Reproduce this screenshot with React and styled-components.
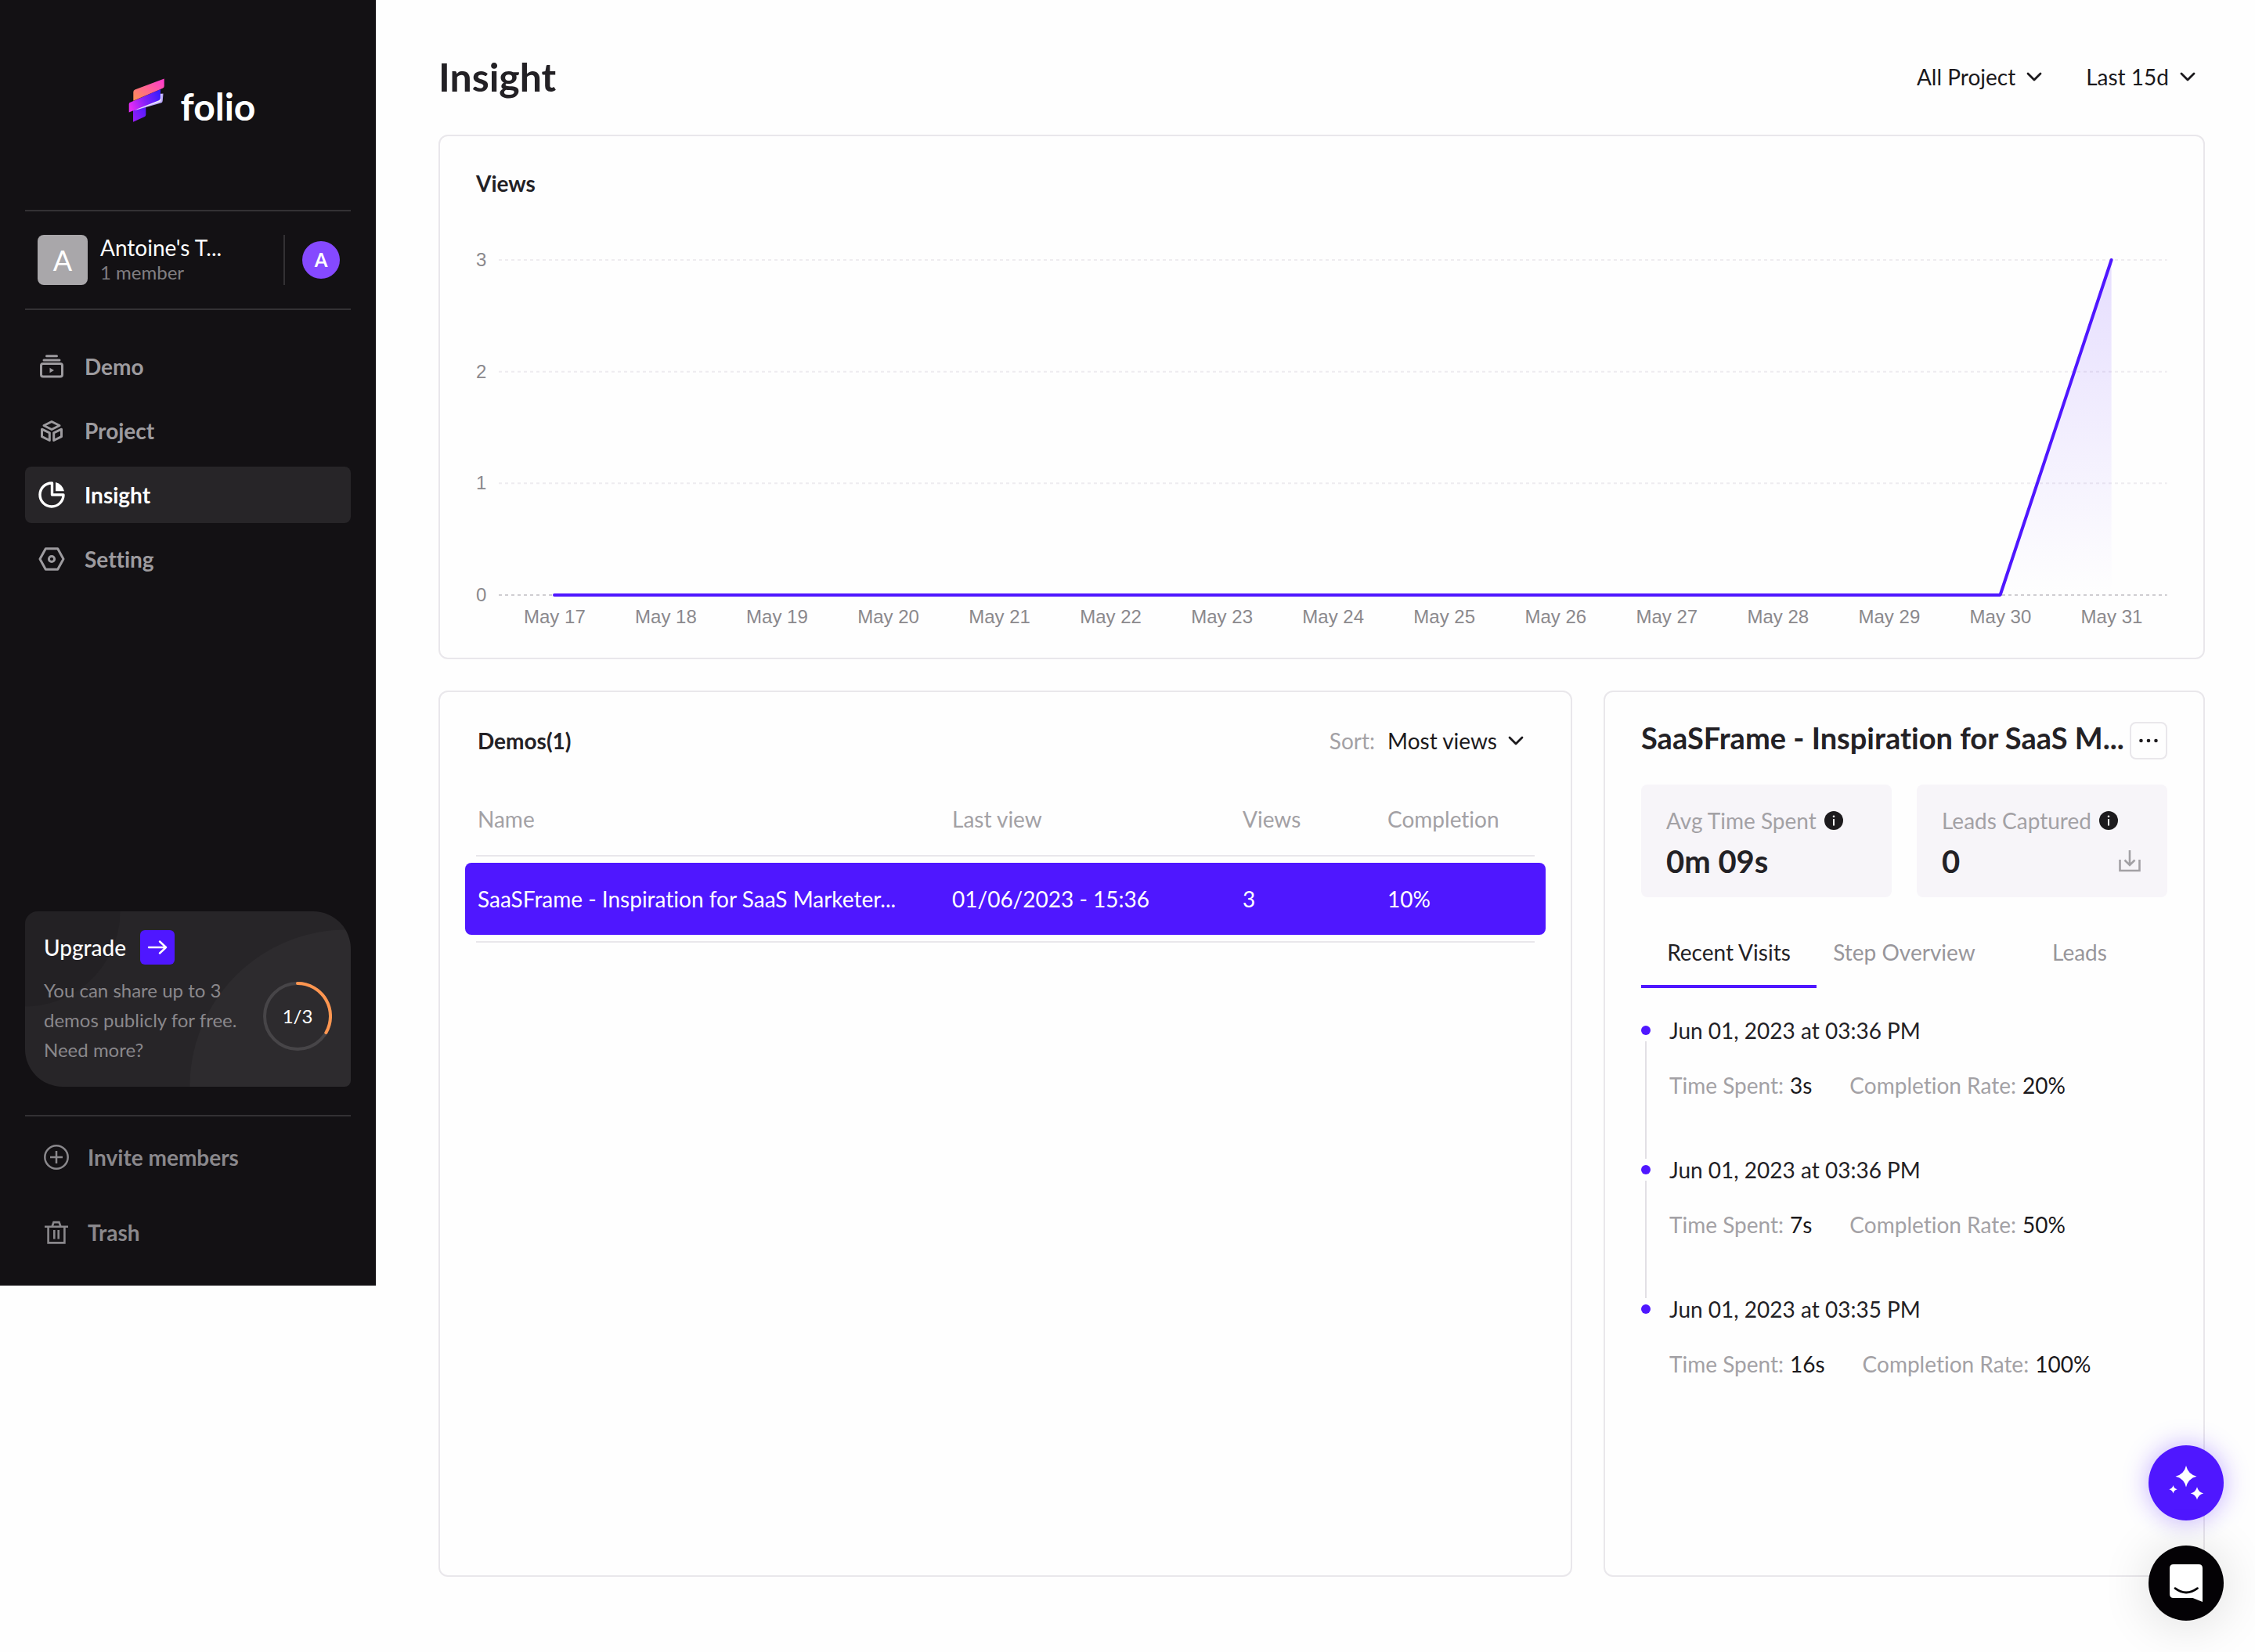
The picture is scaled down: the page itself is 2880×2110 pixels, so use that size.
import React, { useState } from 'react';
import styled, { createGlobalStyle } from 'styled-components';

const GlobalStyle = createGlobalStyle`
  :root {
    --primary: #4f17ff;
    --ink: #232125;
    --muted: #a3a1a5;
    --line: #e9e7eb;
    --sidebar: #131114;
    --sidebar-line: #333134;
  }

  *, *::before, *::after {
    box-sizing: border-box;
  }

  body {
    margin: 0;
    background: #fefefe;
    color: var(--ink);
    font-family: Lato, "Liberation Sans", sans-serif;
    font-size: 28px;
    font-variant-ligatures: none;
    line-height: 40px;
  }

  h1, h2, h3, p, ul, ol, dl, dd {
    margin: 0;
    padding: 0;
  }

  ul, ol {
    list-style: none;
  }

  button, select {
    font: inherit;
    font-variant-ligatures: none;
    color: inherit;
    border: 0;
    padding: 0;
    background: none;
    cursor: pointer;
  }

  a {
    color: inherit;
    text-decoration: none;
  }

  svg {
    display: block;
    flex-shrink: 0;
  }
`;

const Layout = styled.div`
  display: flex;
  align-items: flex-start;
`;

/* Sidebar */

const Sidebar = styled.aside`
  display: flex;
  flex-direction: column;
  flex: 0 0 480px;
  min-height: 1642px;
  padding: 100px 32px 32px;
  background: var(--sidebar);
  color: #fff;
`;

const Logo = styled.a`
  display: flex;
  align-items: flex-start;
  justify-content: center;
  gap: 20px;
  margin-bottom: 102px;
  padding-left: 10px;
`;

const LogoText = styled.span`
  padding-top: 6px;
  font-size: 48px;
  font-weight: 700;
  line-height: 60px;
`;

const Team = styled.div`
  display: flex;
  align-items: center;
  padding: 30px 14px 30px 16px;
  border-top: 2px solid var(--sidebar-line);
  border-bottom: 2px solid var(--sidebar-line);
`;

const TeamAvatar = styled.div`
  width: 64px;
  border-radius: 8px;
  background: #a9a7aa;
  font-size: 36px;
  line-height: 64px;
  text-align: center;
`;

const TeamInfo = styled.div`
  flex: 1;
  margin-left: 16px;
  line-height: 32px;
`;

const TeamMembers = styled.p`
  color: #807e82;
  font-size: 24px;
`;

const UserSlot = styled.div`
  display: flex;
  align-items: center;
  height: 64px;
  padding-left: 22px;
  border-left: 2px solid var(--sidebar-line);
`;

const UserAvatar = styled.button`
  width: 48px;
  height: 48px;
  border-radius: 50%;
  background: #8549ff;
  font-size: 24px;
  font-weight: 700;
  line-height: 48px;
`;

const Nav = styled.nav`
  display: flex;
  flex-direction: column;
  gap: 10px;
  margin-top: 36px;
`;

const NavItem = styled.a`
  display: flex;
  align-items: center;
  gap: 24px;
  height: 72px;
  padding: 0 16px;
  border-radius: 8px;
  background: ${({ $active }) => ($active ? '#272528' : 'transparent')};
  color: ${({ $active }) => ($active ? '#fff' : '#9d9b9f')};
  font-weight: 700;
`;

const Upgrade = styled.section`
  margin-top: auto;
  padding: 24px 24px 28px;
  border-radius: 16px 48px 8px 48px;
  background:
    radial-gradient(circle at 411px 224px, #2d2b2e 200px, transparent 201px),
    radial-gradient(circle at 0 0, #232124 121px, transparent 122px),
    #272528;
`;

const UpgradeHead = styled.div`
  display: flex;
  align-items: center;
  gap: 18px;
`;

const UpgradeTitle = styled.h2`
  font-size: 28px;
  font-weight: 500;
`;

const ArrowButton = styled.button`
  display: grid;
  place-items: center;
  width: 44px;
  height: 44px;
  border-radius: 6px;
  background: var(--primary);
`;

const UpgradeBody = styled.div`
  display: flex;
  gap: 16px;
  margin-top: 14px;
`;

const UpgradeText = styled.p`
  flex: 1;
  color: #8a888c;
  font-size: 24px;
  line-height: 38px;
`;

const Quota = styled.div`
  display: grid;
  place-items: center;
  height: 88px;
  margin: 8px 0 18px;
  font-size: 24px;

  > * {
    grid-area: 1 / 1;
  }
`;

const FooterNav = styled.nav`
  display: flex;
  flex-direction: column;
  gap: 24px;
  margin-top: 36px;
  padding-top: 16px;
  border-top: 2px solid var(--sidebar-line);
`;

const FooterItem = styled(NavItem)`
  padding: 0 24px;
  color: #8a888c;
`;

/* Main */

const Main = styled.main`
  flex: 1;
  min-width: 0;
  padding: 68px 64px 96px 80px;
`;

const PageHeader = styled.header`
  display: flex;
  align-items: center;
  justify-content: space-between;
  margin-bottom: 44px;
`;

const PageTitle = styled.h1`
  font-size: 50px;
  line-height: 60px;
`;

const Filters = styled.div`
  display: flex;
  gap: 56px;
  padding-right: 12px;
`;

const SelectWrap = styled.div`
  display: flex;
  align-items: center;

  svg {
    margin-left: -20px;
    pointer-events: none;
  }
`;

const SelectBox = styled.select`
  appearance: none;
  field-sizing: content;
  height: 40px;
  padding-right: 34px;
  color: #1b191c;
`;

const Card = styled.section`
  border: 2px solid var(--line);
  border-radius: 12px;
`;

const CardTitle = styled.h2`
  font-size: 28px;
`;

const ViewsCard = styled(Card)`
  padding: 40px 46px 38px;
`;

const Chart = styled.div`
  display: grid;
  grid-template-columns: auto minmax(0, 1fr);
  column-gap: 16px;
  margin-top: 64px;
  color: #8b898d;
  font-family: "Liberation Sans", Arial, sans-serif;
  font-size: 24px;
  line-height: 28px;
`;

const YAxis = styled.div`
  display: flex;
  flex-direction: column;
  justify-content: space-between;
`;

const Plot = styled.svg`
  width: 100%;
  height: 428px;
  margin: 14px 0;
  overflow: visible;
`;

const XAxis = styled.div`
  display: grid;
  grid-column: 2;
  grid-template-columns: repeat(15, 1fr);
  text-align: center;
`;

const Panels = styled.div`
  display: grid;
  grid-template-columns: minmax(0, 1fr) 768px;
  gap: 40px;
  margin-top: 40px;
`;

const DemosCard = styled(Card)`
  min-height: 1132px;
  padding: 42px 46px;
`;

const DemosHead = styled.div`
  display: flex;
  justify-content: space-between;
  padding: 0 14px 0 2px;
`;

const Sort = styled.div`
  display: flex;
  gap: 16px;

  label {
    color: var(--muted);
  }
`;

const DemoTable = styled.table`
  display: block;
  margin-top: 60px;

  thead, tbody {
    display: block;
    border-bottom: 2px solid var(--line);
  }

  tbody {
    padding: 8px 0;
  }

  tr {
    display: grid;
    grid-template-columns: 606fr 371fr 185fr 190fr;
  }

  th, td {
    padding: 0 0 0 2px;
    text-align: left;
    white-space: nowrap;
  }

  th {
    padding-bottom: 26px;
    color: var(--muted);
    font-weight: 400;
  }
`;

const SelectedRow = styled.tr`
  margin: 0 -14px;
  padding: 26px 14px;
  border-radius: 8px;
  background: var(--primary);
  color: #fff;
`;

const DetailCard = styled(Card)`
  padding: 38px 46px;
`;

const DetailHead = styled.div`
  display: flex;
  align-items: flex-start;
  justify-content: space-between;
`;

const DetailTitle = styled.h2`
  font-size: 38px;
  white-space: nowrap;
`;

const MoreButton = styled.button`
  display: grid;
  place-items: center;
  width: 48px;
  height: 48px;
  border: 2px solid var(--line);
  border-radius: 8px;
`;

const Stats = styled.div`
  display: grid;
  grid-template-columns: 1fr 1fr;
  gap: 32px;
  margin-top: 32px;
`;

const Stat = styled.div`
  padding: 26px 32px 22px;
  border-radius: 8px;
  background: #f7f5f9;
`;

const StatLabel = styled.div`
  display: flex;
  align-items: center;
  gap: 10px;
  color: var(--muted);
`;

const StatValue = styled.div`
  display: flex;
  align-items: center;
  justify-content: space-between;
  margin-top: 8px;
  font-size: 40px;
  font-weight: 700;
  line-height: 48px;
`;

const Tabs = styled.div`
  display: grid;
  grid-template-columns: repeat(3, 1fr);
  margin-top: 50px;
`;

const Tab = styled.button`
  padding-bottom: 22px;
  border-bottom: 4px solid ${({ $active }) => ($active ? 'var(--primary)' : 'transparent')};
  color: ${({ $active }) => ($active ? 'var(--ink)' : '#98969b')};
`;

const Timeline = styled.ol`
  margin-top: 34px;
`;

const Visit = styled.li`
  display: grid;
  grid-template-columns: 12px 1fr;
  column-gap: 24px;
  min-height: 178px;
`;

const Marker = styled.div`
  display: flex;
  flex-direction: column;
  align-items: center;
  padding-top: 14px;

  &::before {
    content: '';
    width: 12px;
    height: 12px;
    border-radius: 50%;
    background: var(--primary);
  }

  &::after {
    content: '';
    flex: 1;
    width: 2px;
    margin: 8px 0 -6px;
    background: ${({ $last }) => ($last ? 'transparent' : '#e2e0e5')};
  }
`;

const VisitMeta = styled.dl`
  display: flex;
  gap: 48px;
  margin-top: 30px;

  div {
    display: flex;
    gap: 8px;
  }

  dt {
    color: var(--muted);
  }

  dd {
    color: #1b191c;
  }
`;

const Floating = styled.div`
  position: fixed;
  right: 40px;
  bottom: 40px;
  display: flex;
  flex-direction: column;
  gap: 32px;
`;

const FloatingButton = styled.button`
  width: 96px;
  height: 96px;
  border-radius: 50%;
  background: ${({ $dark }) => ($dark ? '#040205' : 'var(--primary)')};
  box-shadow: ${({ $dark }) =>
    $dark ? '0 4px 64px rgba(0, 0, 0, 0.14)' : '0 0 32px rgba(79, 23, 255, 0.35)'};
`;

/* Icons */

const FolioMark = () => (
  <svg width="47" height="56" viewBox="0 0 47 56" aria-hidden="true">
    <defs>
      <linearGradient id="markTop" x1="0" y1="1" x2="1" y2="0">
        <stop offset="0.1" stopColor="#ff8a5c" />
        <stop offset="0.9" stopColor="#ff3fc8" />
      </linearGradient>
      <linearGradient id="markMid" x1="0" y1="0.6" x2="1" y2="0.3">
        <stop offset="0" stopColor="#e42cf5" />
        <stop offset="0.5" stopColor="#8420f8" />
        <stop offset="1" stopColor="#3a1cff" />
      </linearGradient>
      <linearGradient id="markLow" x1="0" y1="1" x2="1" y2="0">
        <stop offset="0" stopColor="#9a1cf5" />
        <stop offset="1" stopColor="#4a1cff" />
      </linearGradient>
    </defs>
    <path d="M6 40L22.3 34v12.5q0 2-2 2.8L6 55.7z" fill="url(#markLow)" />
    <path d="M40 20l4.5-.5-.8 9.5q-.2 2-2.2 2.6L10 40.5z" fill="#b9a8f8" />
    <path d="M40 20l2.3-.3-.6 8q-.2 2-2.2 2.6L8 41z" fill="#e9e2ff" />
    <path d="M.7 33q0-1.600 1.600-2.200L41 14V25q0 2.500-2.200 3.300L.7 43.500z" fill="url(#markMid)" />
    <path d="M6.3 17.500q0-2.200 2-3L45.700.5V10q0 2-2 2.800L6.300 28.800z" fill="url(#markTop)" />
  </svg>
);

const DemoIcon = () => (
  <svg width="36" height="36" fill="none" stroke="currentColor" strokeWidth="3" strokeLinecap="round" aria-hidden="true">
    <path d="M11.5 4.8h13M8 10h20" />
    <rect x="4.5" y="14.5" width="27" height="16.5" rx="2.5" />
    <path d="M15.5 19.8v6.4l5.5-3.2z" fill="currentColor" stroke="none" />
  </svg>
);

const ProjectIcon = () => (
  <svg width="36" height="36" fill="none" stroke="currentColor" strokeWidth="3" strokeLinejoin="round" aria-hidden="true">
    <path d="M18 6.5l10 5-10 5-10-5z" />
    <path d="M5.5 16.2l9.800 4.600v9.700l-9.800-4.800z" />
    <path d="M30.5 16.2l-9.800 4.600v9.700l9.800-4.800z" />
  </svg>
);

const InsightIcon = () => (
  <svg width="36" height="36" fill="none" stroke="currentColor" strokeWidth="3.4" strokeLinejoin="round" aria-hidden="true">
    <path d="M18.5 3A15 15 0 1 0 33 18H18.5z" />
    <path d="M23 2A15.5 15.5 0 0 1 34 13.3H23z" fill="currentColor" stroke="none" />
  </svg>
);

const SettingIcon = () => (
  <svg width="36" height="36" fill="none" stroke="currentColor" strokeWidth="3" strokeLinejoin="round" aria-hidden="true">
    <path d="M10.3 4.8h15.4L33 18l-7.3 13.2H10.300L3 18z" />
    <circle cx="18" cy="18" r="3.6" />
  </svg>
);

const InviteIcon = () => (
  <svg width="32" height="32" fill="none" stroke="currentColor" strokeWidth="2.5" aria-hidden="true">
    <circle cx="16" cy="16" r="14.7" />
    <path d="M16 8v16M8 16h16" />
  </svg>
);

const TrashIcon = () => (
  <svg width="32" height="32" fill="none" stroke="currentColor" strokeWidth="2.6" aria-hidden="true">
    <path d="M1 8.700h30M10.500 8.700l2-5.600h7l2 5.600M5.600 8.700v20.700h20.800V8.700M13.300 13v11.500M18.700 13v11.500" />
  </svg>
);

const ArrowIcon = () => (
  <svg width="26" height="18" fill="none" stroke="#fff" strokeWidth="2.4" strokeLinecap="round" strokeLinejoin="round" aria-hidden="true">
    <path d="M2 9h22M16 1.5L24 9l-8 7.5" />
  </svg>
);

const Chevron = () => (
  <svg width="20" height="12" fill="none" stroke="#1b191c" strokeWidth="2.8" strokeLinecap="round" strokeLinejoin="round" aria-hidden="true">
    <path d="M2 2l8 8 8-8" />
  </svg>
);

const InfoIcon = () => (
  <svg width="24" height="24" aria-hidden="true">
    <circle cx="12" cy="12" r="12" fill="#1d1b1e" />
    <circle cx="12" cy="6.8" r="1.3" fill="#fff" />
    <path d="M12 10v8.5" stroke="#fff" strokeWidth="2" />
  </svg>
);

const DownloadIcon = () => (
  <svg width="30" height="28" fill="none" stroke="#a3a1a5" strokeWidth="2.6" aria-hidden="true">
    <path d="M1.5 12v14h25V12M14 0v19M7.5 12.500L14 19l6.500-6.500" />
  </svg>
);

const DotsIcon = () => (
  <svg width="24" height="6" fill="#1d1b1e" aria-hidden="true">
    <circle cx="2.5" cy="3" r="2.3" />
    <circle cx="12" cy="3" r="2.3" />
    <circle cx="21.5" cy="3" r="2.3" />
  </svg>
);

const SparkleIcon = () => (
  <svg width="96" height="96" fill="#fff" aria-hidden="true">
    <path d="M48 26q2.500 11 13.500 13.700Q50.500 42.400 48 53.500 45.500 42.400 34.500 39.700 45.500 37 48 26z" />
    <path d="M31.5 51q1 4.300 5.200 5.300-4.200 1-5.200 5.300-1-4.300-5.200-5.300 4.200-1 5.200-5.300z" />
    <path d="M62 53.3q1.600 6.500 8.200 8.100-6.600 1.600-8.200 8.100-1.600-6.500-8.200-8.100 6.600-1.600 8.200-8.100z" />
  </svg>
);

const ChatIcon = () => (
  <svg width="96" height="96" fill="none" aria-hidden="true">
    <path d="M32 24h32q5 0 5 5v43l-12.500-5H32q-5 0-5-5V29q0-5 5-5z" fill="#fff" />
    <path d="M34 54.7q14 10.600 28.500 0" stroke="#040205" strokeWidth="2.8" strokeLinecap="round" />
  </svg>
);

const NAV = [
  { label: 'Demo', icon: DemoIcon },
  { label: 'Project', icon: ProjectIcon },
  { label: 'Insight', icon: InsightIcon, active: true },
  { label: 'Setting', icon: SettingIcon },
];

const VIEWS = [0, 0, 0, 0, 0, 0, 0, 0, 0, 0, 0, 0, 0, 0, 3];
const TICKS = [3, 2, 1, 0];
const TABS = ['Recent Visits', 'Step Overview', 'Leads'];

const VISITS = [
  { date: 'Jun 01, 2023 at 03:36 PM', time: '3s', rate: '20%' },
  { date: 'Jun 01, 2023 at 03:36 PM', time: '7s', rate: '50%' },
  { date: 'Jun 01, 2023 at 03:35 PM', time: '16s', rate: '100%' },
];

const ViewsChart = () => {
  const y = (value) => 428 - (value / 3) * 428;
  const points = VIEWS.map((value, i) => `${i * 100 + 50},${y(value)}`);

  return (
    <Chart>
      <YAxis>
        {TICKS.map((tick) => (
          <span key={tick}>{tick}</span>
        ))}
      </YAxis>
      <Plot viewBox="0 0 1500 428" preserveAspectRatio="none" role="img" aria-label="Views per day">
        <defs>
          <linearGradient id="viewsFill" x1="0" y1="0" x2="0" y2="1">
            <stop offset="0" stopColor="#4f17ff" stopOpacity="0.14" />
            <stop offset="1" stopColor="#4f17ff" stopOpacity="0" />
          </linearGradient>
        </defs>
        {TICKS.map((tick) => (
          <line
            key={tick}
            x1="0"
            x2="1500"
            y1={y(tick)}
            y2={y(tick)}
            stroke={tick === 0 ? '#cfcdd1' : '#eeecf0'}
            strokeWidth="2"
            strokeDasharray="4 4"
            vectorEffect="non-scaling-stroke"
          />
        ))}
        <polygon points={`50,428 ${points.join(' ')} 1450,428`} fill="url(#viewsFill)" />
        <polyline
          points={points.join(' ')}
          fill="none"
          stroke="#4f17ff"
          strokeWidth="4"
          strokeLinecap="round"
          strokeLinejoin="bevel"
          vectorEffect="non-scaling-stroke"
        />
      </Plot>
      <XAxis>
        {VIEWS.map((_, i) => (
          <span key={i}>May {17 + i}</span>
        ))}
      </XAxis>
    </Chart>
  );
};

const Dropdown = ({ id, label, value }) => (
  <SelectWrap>
    <SelectBox id={id} aria-label={label} defaultValue={value}>
      <option>{value}</option>
    </SelectBox>
    <Chevron />
  </SelectWrap>
);

const AppSidebar = () => (
  <Sidebar>
    <Logo href="#">
      <FolioMark />
      <LogoText>folio</LogoText>
    </Logo>
    <Team>
      <TeamAvatar>A</TeamAvatar>
      <TeamInfo>
        <p>Antoine's T...</p>
        <TeamMembers>1 member</TeamMembers>
      </TeamInfo>
      <UserSlot>
        <UserAvatar>A</UserAvatar>
      </UserSlot>
    </Team>
    <Nav>
      {NAV.map(({ label, icon: Icon, active }) => (
        <NavItem key={label} href="#" $active={active}>
          <Icon />
          {label}
        </NavItem>
      ))}
    </Nav>
    <Upgrade>
      <UpgradeHead>
        <UpgradeTitle>Upgrade</UpgradeTitle>
        <ArrowButton aria-label="Upgrade">
          <ArrowIcon />
        </ArrowButton>
      </UpgradeHead>
      <UpgradeBody>
        <UpgradeText>You can share up to 3 demos publicly for free. Need more?</UpgradeText>
        <Quota>
          <svg width="88" height="88" fill="none" strokeWidth="4" aria-hidden="true">
            <circle cx="44" cy="44" r="42" stroke="#474548" />
            <path d="M44 2a42 42 0 0 1 36.4 63" stroke="#ff9650" strokeLinecap="round" />
          </svg>
          <span>1/3</span>
        </Quota>
      </UpgradeBody>
    </Upgrade>
    <FooterNav>
      <FooterItem href="#">
        <InviteIcon />
        Invite members
      </FooterItem>
      <FooterItem href="#">
        <TrashIcon />
        Trash
      </FooterItem>
    </FooterNav>
  </Sidebar>
);

const App = () => {
  const [tab, setTab] = useState(TABS[0]);

  return (
    <>
      <GlobalStyle />
      <Layout>
        <AppSidebar />
        <Main>
          <PageHeader>
            <PageTitle>Insight</PageTitle>
            <Filters>
              <Dropdown id="project" label="Project" value="All Project" />
              <Dropdown id="range" label="Date range" value="Last 15d" />
            </Filters>
          </PageHeader>

          <ViewsCard>
            <CardTitle>Views</CardTitle>
            <ViewsChart />
          </ViewsCard>

          <Panels>
            <DemosCard>
              <DemosHead>
                <CardTitle>Demos(1)</CardTitle>
                <Sort>
                  <label htmlFor="sort">Sort:</label>
                  <Dropdown id="sort" value="Most views" />
                </Sort>
              </DemosHead>
              <DemoTable>
                <thead>
                  <tr>
                    <th>Name</th>
                    <th>Last view</th>
                    <th>Views</th>
                    <th>Completion</th>
                  </tr>
                </thead>
                <tbody>
                  <SelectedRow>
                    <td>SaaSFrame - Inspiration for SaaS Marketer...</td>
                    <td>01/06/2023 - 15:36</td>
                    <td>3</td>
                    <td>10%</td>
                  </SelectedRow>
                </tbody>
              </DemoTable>
            </DemosCard>

            <DetailCard>
              <DetailHead>
                <DetailTitle>SaaSFrame - Inspiration for SaaS M...</DetailTitle>
                <MoreButton aria-label="More">
                  <DotsIcon />
                </MoreButton>
              </DetailHead>
              <Stats>
                <Stat>
                  <StatLabel>
                    Avg Time Spent <InfoIcon />
                  </StatLabel>
                  <StatValue>0m 09s</StatValue>
                </Stat>
                <Stat>
                  <StatLabel>
                    Leads Captured <InfoIcon />
                  </StatLabel>
                  <StatValue>
                    0
                    <button aria-label="Download leads">
                      <DownloadIcon />
                    </button>
                  </StatValue>
                </Stat>
              </Stats>
              <Tabs role="tablist">
                {TABS.map((name) => (
                  <Tab
                    key={name}
                    role="tab"
                    aria-selected={tab === name}
                    $active={tab === name}
                    onClick={() => setTab(name)}
                  >
                    {name}
                  </Tab>
                ))}
              </Tabs>
              <Timeline>
                {VISITS.map((visit, i) => (
                  <Visit key={i}>
                    <Marker $last={i === VISITS.length - 1} />
                    <div>
                      <p>{visit.date}</p>
                      <VisitMeta>
                        <div>
                          <dt>Time Spent:</dt>
                          <dd>{visit.time}</dd>
                        </div>
                        <div>
                          <dt>Completion Rate:</dt>
                          <dd>{visit.rate}</dd>
                        </div>
                      </VisitMeta>
                    </div>
                  </Visit>
                ))}
              </Timeline>
            </DetailCard>
          </Panels>
        </Main>
      </Layout>
      <Floating>
        <FloatingButton aria-label="What's new">
          <SparkleIcon />
        </FloatingButton>
        <FloatingButton $dark aria-label="Open chat">
          <ChatIcon />
        </FloatingButton>
      </Floating>
    </>
  );
};

export default App;
